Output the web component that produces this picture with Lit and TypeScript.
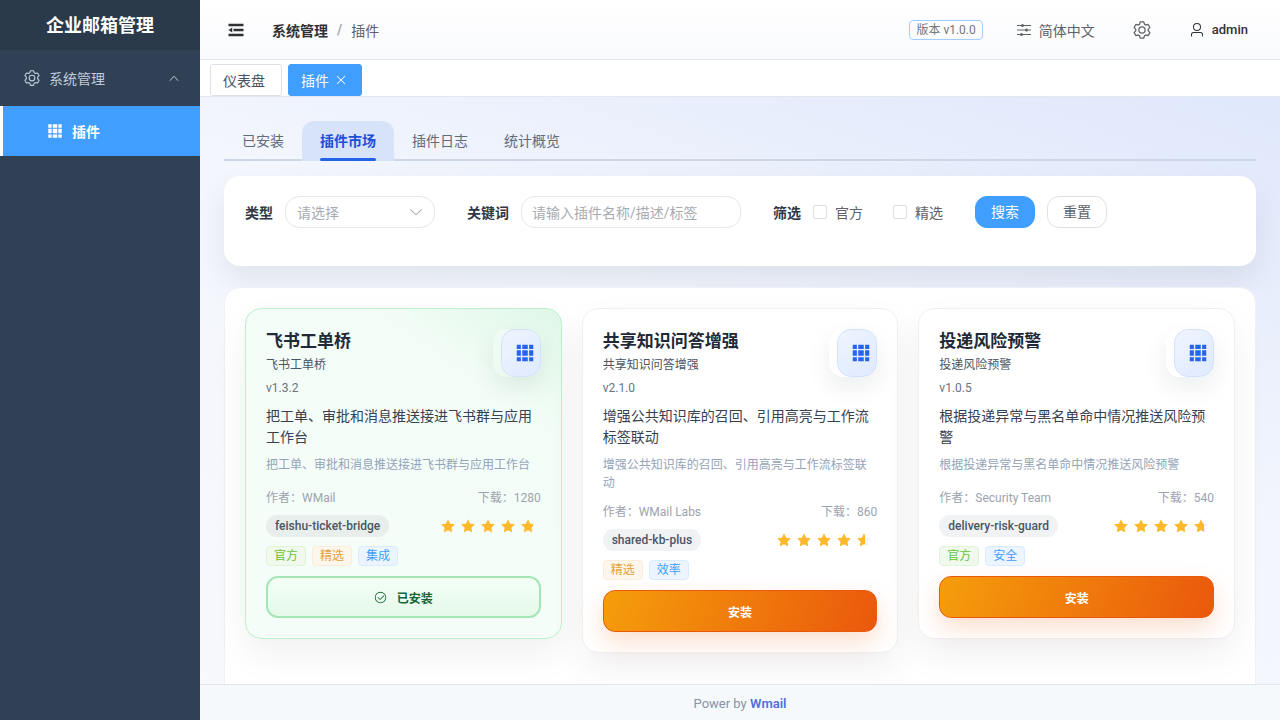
import { LitElement, html, css, svg } from "lit";
import { customElement } from "lit/decorators.js";

const ICONS: Record<string, string> = {
  grid: "M640 384v256H384V384zm64 0h192v256H704zm-64 512H384V704h256zm64 0V704h192v192zm-64-768v192H384V128zm64 0h192v192H704zM320 384v256H128V384zm0 512H128V704h192zm0-768v192H128V128z",
  gear: "M600.704 64a32 32 0 0 1 30.464 22.208l35.2 109.376c14.784 7.232 28.928 15.36 42.432 24.512l112.384-24.192a32 32 0 0 1 34.432 15.36L944.32 364.8a32 32 0 0 1-4.032 37.504l-77.12 85.12a357.12 357.12 0 0 1 0 49.024l77.12 85.248a32 32 0 0 1 4.032 37.504l-88.704 153.6a32 32 0 0 1-34.432 15.296L708.8 803.904c-13.44 9.088-27.648 17.28-42.368 24.512l-35.264 109.376A32 32 0 0 1 600.704 960H423.296a32 32 0 0 1-30.464-22.208L357.696 828.48a351.616 351.616 0 0 1-42.56-24.64l-112.32 24.256a32 32 0 0 1-34.432-15.36L79.68 659.2a32 32 0 0 1 4.032-37.504l77.12-85.248a357.12 357.12 0 0 1 0-48.896l-77.12-85.248A32 32 0 0 1 79.68 364.8l88.704-153.6a32 32 0 0 1 34.432-15.296l112.32 24.256c13.568-9.152 27.776-17.408 42.56-24.64l35.2-109.312A32 32 0 0 1 423.232 64H600.64zm-23.424 64H446.72l-36.352 113.088-24.512 11.968a294.113 294.113 0 0 0-34.816 20.096l-22.656 15.36-116.224-25.088-65.28 113.152 79.68 88.192-1.92 27.136a293.12 293.12 0 0 0 0 40.192l1.92 27.136-79.808 88.192 65.344 113.152 116.224-25.024 22.656 15.296a294.113 294.113 0 0 0 34.816 20.096l24.512 11.968L446.72 896h130.688l36.48-113.152 24.448-11.904a288.282 288.282 0 0 0 34.752-20.096l22.592-15.296 116.288 25.024 65.28-113.152-79.744-88.192 1.92-27.136a293.12 293.12 0 0 0 0-40.256l-1.92-27.136 79.808-88.128-65.344-113.152-116.288 24.96-22.592-15.232a287.616 287.616 0 0 0-34.752-20.096l-24.448-11.904L577.344 128zM512 320a192 192 0 1 1 0 384 192 192 0 0 1 0-384m0 64a128 128 0 1 0 0 256 128 128 0 0 0 0-256",
  star: "M283.84 867.84 512 747.776l228.16 119.936a6.4 6.4 0 0 0 9.28-6.72l-43.52-254.08 184.512-179.904a6.4 6.4 0 0 0-3.52-10.88l-255.104-37.12L517.76 147.904a6.4 6.4 0 0 0-11.52 0L392.192 379.072l-255.104 37.12a6.4 6.4 0 0 0-3.52 10.88L318.08 606.976l-43.584 254.08a6.4 6.4 0 0 0 9.28 6.72z",
  check: "M512 896a384 384 0 1 0 0-768 384 384 0 0 0 0 768m0 64a448 448 0 1 1 0-896 448 448 0 0 1 0 896M745.344 361.344a32 32 0 0 1 45.312 45.312l-288 288a32 32 0 0 1-45.312 0l-160-160a32 32 0 1 1 45.312-45.312L480 626.752z",
  user: "M512 512a192 192 0 1 0 0-384 192 192 0 0 0 0 384m0 64a256 256 0 1 1 0-512 256 256 0 0 1 0 512m320 320v-96a96 96 0 0 0-96-96H288a96 96 0 0 0-96 96v96a32 32 0 1 1-64 0v-96a160 160 0 0 1 160-160h448a160 160 0 0 1 160 160v96a32 32 0 1 1-64 0",
  up: "M488.832 344.32l-339.84 356.672a32 32 0 0 0 0 44.16l.384.384a29.44 29.44 0 0 0 42.688 0l320-335.872 319.872 335.872a29.44 29.44 0 0 0 42.688 0l.384-.384a32 32 0 0 0 0-44.16L535.168 344.32a32 32 0 0 0-46.336 0",
  down: "M831.872 340.864 512 652.672 192.128 340.864a30.592 30.592 0 0 0-42.752 0 29.12 29.12 0 0 0 0 41.6L489.664 714.24a32 32 0 0 0 44.672 0l340.288-331.712a29.12 29.12 0 0 0 0-41.728 30.592 30.592 0 0 0-42.752 0z",
  close: "M764.288 214.592 512 466.88 259.712 214.592a31.936 31.936 0 0 0-45.12 45.12L466.752 512 214.528 764.224a31.936 31.936 0 1 0 45.12 45.184L512 557.184l252.288 252.288a31.936 31.936 0 0 0 45.12-45.12L557.12 512.064l252.288-252.352a31.936 31.936 0 1 0-45.12-45.184z",
  fold: "M896 192H128v128h768zm0 256H384v128h512zm0 256H128v128h768zM320 384 128 512l192 128z",
  sliders: "M64 192h288v64H64zM480 192h480v64H480zM416 128a96 96 0 1 1 0 192 96 96 0 0 1 0-192zM64 480h544v64H64zM736 480h224v64H736zM672 416a96 96 0 1 1 0 192 96 96 0 0 1 0-192zM64 768h224v64H64zM416 768h544v64H416zM352 704a96 96 0 1 1 0 192 96 96 0 0 1 0-192z",
};

function icon(name: string, size: number) {
  return html`<svg width=${size} height=${size} viewBox="0 0 1024 1024" fill="currentColor" style="display:block;flex:none">${svg`<path d=${ICONS[name]}></path>`}</svg>`;
}

interface Plugin {
  name: string;
  version: string;
  desc: string;
  author: string;
  downloads: number;
  slug: string;
  rating: number;
  tags: [string, string][];
  installed: boolean;
}

const PLUGINS: Plugin[] = [
  {
    name: "飞书工单桥",
    version: "v1.3.2",
    desc: "把工单、审批和消息推送接进飞书群与应用工作台",
    author: "WMail",
    downloads: 1280,
    slug: "feishu-ticket-bridge",
    rating: 0.8,
    tags: [["官方", "green"], ["精选", "orange"], ["集成", "blue"]],
    installed: true,
  },
  {
    name: "共享知识问答增强",
    version: "v2.1.0",
    desc: "增强公共知识库的召回、引用高亮与工作流标签联动",
    author: "WMail Labs",
    downloads: 860,
    slug: "shared-kb-plus",
    rating: 0.55,
    tags: [["精选", "orange"], ["效率", "blue"]],
    installed: false,
  },
  {
    name: "投递风险预警",
    version: "v1.0.5",
    desc: "根据投递异常与黑名单命中情况推送风险预警",
    author: "Security Team",
    downloads: 540,
    slug: "delivery-risk-guard",
    rating: 0.65,
    tags: [["官方", "green"], ["安全", "blue"]],
    installed: false,
  },
];

@customElement("plugin-card")
export class PluginCard extends LitElement {
  static properties = { plugin: { attribute: false } };
  declare plugin: Plugin;

  static styles = css`
    :host { display: block; }
    .card {
      position: relative;
      padding: 20px;
      border: 1px solid #eef0f4;
      border-radius: 16px;
      background: #fff;
      box-shadow: 0 16px 36px rgba(15, 23, 42, 0.06);
    }
    .card.installed {
      border-color: #bbf0cb;
      background: linear-gradient(215deg, #dff7e7 0, #f3fdf7 24%, #f5fdf8 100%);
    }
    .logo {
      position: absolute;
      top: 20px;
      right: 20px;
      width: 48px;
      height: 48px;
      border-radius: 14px;
      background: #fff;
      box-shadow: 0 10px 24px rgba(15, 23, 42, 0.08);
    }
    .installed .logo { background: linear-gradient(135deg, #f2fbf5, #e6f7ec); }
    .logo-inner {
      position: absolute;
      top: 0;
      right: 0;
      bottom: 0;
      width: 40px;
      box-sizing: border-box;
      padding-left: 8px;
      display: flex;
      align-items: center;
      justify-content: center;
      border: 1px solid #d3e2fb;
      border-radius: 14px;
      background: linear-gradient(135deg, #eff5ff, #dfeaff);
      color: #2563eb;
    }
    .name { font-size: 17px; line-height: 24px; font-weight: 700; color: #1f2937; }
    .sub { margin-top: 3px; font-size: 12px; line-height: 18px; color: #4b5563; }
    .ver { margin-top: 5px; font-size: 12px; line-height: 18px; color: #6b7280; }
    .desc { margin-top: 9px; font-size: 14px; line-height: 21px; color: #374151; }
    .note { margin-top: 8px; min-height: 22px; font-size: 12px; line-height: 18px; color: #94a3b8; }
    .meta {
      display: flex;
      justify-content: space-between;
      margin-top: 11px;
      font-size: 12px;
      line-height: 18px;
      color: #9ca3af;
    }
    .row { display: flex; justify-content: space-between; align-items: center; margin-top: 8px; }
    .slug {
      padding: 0 9px;
      height: 22px;
      line-height: 22px;
      border-radius: 11px;
      background: #f1f2f4;
      font-size: 12px;
      font-weight: 500;
      color: #4b5563;
    }
    .installed .slug { background: #e8eeeb; }
    .rate { display: flex; gap: 2px; margin-right: 4px; }
    .star { position: relative; width: 18px; height: 18px; color: #eff2f7; }
    .star-fill { position: absolute; left: 0; top: 0; height: 18px; overflow: hidden; color: #fdb92a; }
    .tags { display: flex; gap: 6px; margin-top: 9px; }
    .tag {
      box-sizing: border-box;
      height: 20px;
      line-height: 18px;
      padding: 0 7px;
      border: 1px solid;
      border-radius: 4px;
      font-size: 12px;
    }
    .tag.green { color: #67c23a; background: #f0f9eb; border-color: #e1f3d8; }
    .tag.orange { color: #e6a23c; background: #fdf6ec; border-color: #faecd8; }
    .tag.blue { color: #409eff; background: #ecf5ff; border-color: #d9ecff; }
    .btn {
      box-sizing: border-box;
      display: flex;
      align-items: center;
      justify-content: center;
      gap: 10px;
      height: 42px;
      margin-top: 10px;
      border-radius: 12px;
      font-size: 12px;
      font-weight: 700;
    }
    .btn.install {
      border: 1px solid #ea580c;
      background: linear-gradient(110deg, #f59e0b, #ea580c);
      color: #fff;
      box-shadow: 0 10px 24px rgba(234, 88, 12, 0.2);
    }
    .btn.done {
      border: 2px solid #a5e6b6;
      background: linear-gradient(180deg, #f4fff6, #e5f9ea);
      color: #166534;
    }
  `;

  render() {
    const p = this.plugin;
    return html`
      <div class="card ${p.installed ? "installed" : ""}">
        <div class="logo"><div class="logo-inner">${icon("grid", 22)}</div></div>
        <div class="name">${p.name}</div>
        <div class="sub">${p.name}</div>
        <div class="ver">${p.version}</div>
        <div class="desc">${p.desc}</div>
        <div class="note">${p.desc}</div>
        <div class="meta"><span>作者：${p.author}</span><span>下载：${p.downloads}</span></div>
        <div class="row">
          <span class="slug">${p.slug}</span>
          <div class="rate">
            ${[1, 1, 1, 1, p.rating].map(
              (v) => html`<span class="star">${icon("star", 18)}<span class="star-fill" style="width:${v * 18}px">${icon("star", 18)}</span></span>`
            )}
          </div>
        </div>
        <div class="tags">${p.tags.map(([t, c]) => html`<span class="tag ${c}">${t}</span>`)}</div>
        ${p.installed
          ? html`<div class="btn done">${icon("check", 13)}<span>已安装</span></div>`
          : html`<div class="btn install">安装</div>`}
      </div>
    `;
  }
}

@customElement("app-root")
export class AppRoot extends LitElement {
  static styles = css`
    :host {
      display: flex;
      width: 1280px;
      height: 720px;
      overflow: hidden;
      font-family: Roboto, "Noto Sans CJK SC", sans-serif;
      font-size: 14px;
      color: #303133;
    }
    .side { width: 200px; flex: none; background: #304156; }
    .brand {
      height: 50px;
      line-height: 52px;
      text-align: center;
      background: #2b3a4b;
      color: #fff;
      font-size: 18px;
      font-weight: 700;
    }
    .menu {
      display: flex;
      align-items: center;
      height: 56px;
      padding: 0 20px 0 23px;
      color: #bfcbd9;
    }
    .menu span { margin-left: 8px; flex: 1; }
    .item {
      display: flex;
      align-items: center;
      gap: 8px;
      height: 50px;
      padding-left: 43px;
      border-left: 3px solid #fff;
      background: #409eff;
      color: #fff;
      font-size: 14px;
      font-weight: 700;
    }
    .main { flex: 1; min-width: 0; display: flex; flex-direction: column; }
    .top {
      box-sizing: border-box;
      height: 60px;
      flex: none;
      display: flex;
      align-items: center;
      padding: 0 32px 0 26px;
      border-bottom: 1px solid #e4e7ed;
      background: linear-gradient(180deg, #fff, #f9fafd);
    }
    .crumb { margin-left: 26px; font-size: 14px; font-weight: 600; color: #303133; }
    .slash { margin: 0 9px; color: #a8abb2; font-weight: 700; }
    .crumb-now { font-size: 14px; color: #606266; }
    .spacer { flex: 1; }
    .ver-tag {
      height: 20px;
      line-height: 18px;
      padding: 0 6px;
      box-sizing: border-box;
      border: 1px solid #a0cfff;
      border-radius: 4px;
      font-size: 12px;
      color: #73767a;
    }
    .lang { display: flex; align-items: center; gap: 7px; margin-left: 33px; color: #606266; }
    .cog { margin-left: 37px; color: #606266; }
    .who { display: flex; align-items: center; gap: 7px; margin-left: 37px; font-size: 13px; font-weight: 500; color: #303133; }
    .bar {
      box-sizing: border-box;
      height: 37px;
      flex: none;
      display: flex;
      gap: 6px;
      padding: 4px 10px 0;
      border-bottom: 1px solid #e4e7ed;
      background: #fff;
    }
    .chip {
      box-sizing: border-box;
      display: flex;
      align-items: center;
      gap: 5px;
      height: 32px;
      padding: 0 16px 0 12px;
      border: 1px solid #dcdfe6;
      border-radius: 3px;
      color: #495060;
      font-size: 14px;
    }
    .chip.on { padding-right: 13px; background: #409eff; border-color: #409eff; color: #fff; }
    .body {
      flex: 1;
      min-height: 0;
      overflow: hidden;
      padding: 24px 24px 0;
      background: linear-gradient(200deg, #dfe7fb 0, #f3f6fd 45%, #f7f9fd 100%);
    }
    .tabs { display: flex; height: 40px; border-bottom: 2px solid #cdd6e5; box-sizing: border-box; }
    .tab {
      position: relative;
      height: 40px;
      line-height: 40px;
      padding: 0 18px;
      color: #606b7d;
      border-radius: 12px 12px 0 0;
    }
    .tab.on { background: #d7e3f8; color: #1d4ed8; font-weight: 600; }
    .tab.on::after {
      content: "";
      position: absolute;
      left: 18px;
      right: 18px;
      bottom: 0;
      height: 3px;
      border-radius: 2px;
      background: #2563eb;
    }
    .filter {
      display: flex;
      align-items: center;
      box-sizing: border-box;
      height: 90px;
      margin-top: 15px;
      padding: 20px 21px 38px;
      border-radius: 16px;
      background: #fff;
      box-shadow: 0 16px 32px rgba(15, 23, 42, 0.08);
    }
    .lab { font-weight: 600; color: #303846; margin-right: 12px; }
    .field {
      box-sizing: border-box;
      display: flex;
      align-items: center;
      justify-content: space-between;
      height: 32px;
      padding: 0 10px 0 11px;
      border: 1px solid #e4e7ed;
      border-radius: 14px;
      color: #a8abb2;
      margin-right: 32px;
    }
    .field.select { width: 150px; }
    .field.input { width: 220px; padding-left: 10px; }
    .box {
      box-sizing: border-box;
      width: 14px;
      height: 14px;
      margin-right: 8px;
      border: 1px solid #dcdfe6;
      border-radius: 2px;
    }
    .opt { color: #606266; margin-right: 30px; }
    .opt.last { margin-right: 32px; }
    .act {
      box-sizing: border-box;
      width: 60px;
      height: 32px;
      line-height: 30px;
      text-align: center;
      border: 1px solid #dcdfe6;
      border-radius: 12px;
      color: #606266;
    }
    .act.primary { background: #409eff; border-color: #409eff; color: #fff; margin-right: 12px; }
    .panel {
      display: grid;
      grid-template-columns: repeat(3, 1fr);
      gap: 20px;
      align-items: start;
      margin-top: 21px;
      padding: 20px 20px 60px;
      border: 1px solid #eef1f6;
      border-radius: 16px;
      background: #fff;
    }
    .foot {
      box-sizing: border-box;
      height: 36px;
      flex: none;
      line-height: 37px;
      text-align: center;
      border-top: 1px solid #e4e7ed;
      background: #f6f9fc;
      font-size: 13px;
      color: #8a92a3;
    }
    .foot b { font-weight: 600; color: #4f6fdc; }
  `;

  render() {
    return html`
      <aside class="side">
        <div class="brand">企业邮箱管理</div>
        <div class="menu">${icon("gear", 18)}<span>系统管理</span>${icon("up", 12)}</div>
        <div class="item">${icon("grid", 18)}插件</div>
      </aside>
      <div class="main">
        <header class="top">
          ${icon("fold", 20)}
          <span class="crumb">系统管理</span><span class="slash">/</span><span class="crumb-now">插件</span>
          <span class="spacer"></span>
          <span class="ver-tag">版本 v1.0.0</span>
          <span class="lang">${icon("sliders", 16)}简体中文</span>
          <span class="cog">${icon("gear", 20)}</span>
          <span class="who">${icon("user", 16)}admin</span>
        </header>
        <nav class="bar">
          <span class="chip">仪表盘</span>
          <span class="chip on">插件${icon("close", 14)}</span>
        </nav>
        <section class="body">
          <div class="tabs">
            <div class="tab">已安装</div>
            <div class="tab on">插件市场</div>
            <div class="tab">插件日志</div>
            <div class="tab">统计概览</div>
          </div>
          <div class="filter">
            <span class="lab">类型</span>
            <span class="field select">请选择${icon("down", 16)}</span>
            <span class="lab">关键词</span>
            <span class="field input">请输入插件名称/描述/标签</span>
            <span class="lab">筛选</span>
            <span class="box"></span><span class="opt">官方</span>
            <span class="box"></span><span class="opt last">精选</span>
            <span class="act primary">搜索</span>
            <span class="act">重置</span>
          </div>
          <div class="panel">
            ${PLUGINS.map((p) => html`<plugin-card .plugin=${p}></plugin-card>`)}
          </div>
        </section>
        <footer class="foot">Power by <b>Wmail</b></footer>
      </div>
    `;
  }
}
